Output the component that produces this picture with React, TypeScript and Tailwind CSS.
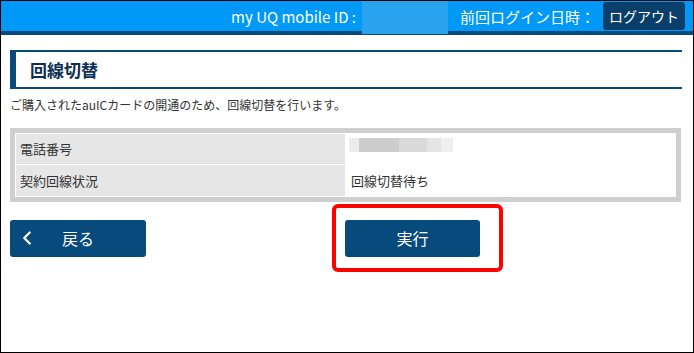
import { ChevronLeft } from 'lucide-react'

const jp = { fontFamily: '"Noto Sans CJK JP", "Noto Sans", sans-serif' }

export default function App() {
  return (
    <div className="w-[694px] h-[353px] bg-white border border-black overflow-hidden" style={jp}>
      {/* ヘッダー */}
      <div className="h-[34px] bg-[#0099f8] border-b-4 border-[#084a7c] flex items-center justify-end pr-[8px] text-white">
        <span className="text-[15px] leading-none">my UQ mobile ID :</span>
        <div className="w-[86px] h-[33px] mt-[2px] bg-[#2aa3ef] ml-[6px] mr-[12px]"></div>
        <span className="text-[15px] leading-none">前回ログイン日時：</span>
        <button className="ml-[8px] h-[28px] px-[6px] bg-[#0a3f6b] rounded-[3px] text-[14px] leading-none">
          ログアウト
        </button>
      </div>

      <div className="px-[9px]">
        {/* タイトル */}
        <div className="mt-[15px] mr-[2px] border-t-2 border-b-2 border-[#084a7c] flex h-[39px]">
          <div className="w-[6px] bg-[#084a7c]"></div>
          <h1 className="ml-[14px] flex items-center text-[17px] font-bold text-[#0c2f52]">回線切替</h1>
        </div>

        <p className="mt-[10px] text-[12px] text-[#333] leading-none">
          ご購入されたauICカードの開通のため、回線切替を行います。
        </p>

        {/* テーブル */}
        <div className="mt-[17px] mr-[3px] bg-[#cfcfcf] p-[5px]">
          <table className="w-full border-collapse text-[13px] text-[#333]">
            <tbody>
              <tr className="h-[31px]">
                <td className="w-[330px] bg-[#e6e6e6] border border-white pl-[4px]">電話番号</td>
                <td className="bg-white border border-white pl-[3px]">
                  <div className="flex h-[14px] -mt-[8px]">
                    <div className="w-[10px] bg-[#ececec]"></div>
                    <div className="w-[40px] bg-[#cdcdcd]"></div>
                    <div className="w-[28px] bg-[#d9d9d9]"></div>
                    <div className="w-[14px] bg-[#e4e4e4]"></div>
                    <div className="w-[12px] bg-[#efefef]"></div>
                  </div>
                </td>
              </tr>
              <tr className="h-[32px]">
                <td className="bg-[#e6e6e6] border border-white pl-[4px]">契約回線状況</td>
                <td className="bg-white border border-white pl-[5px]">回線切替待ち</td>
              </tr>
            </tbody>
          </table>
        </div>

        {/* ボタン */}
        <div className="mt-[2px] flex items-center">
          <button className="w-[136px] h-[37px] bg-[#084a7c] rounded-[3px] text-white flex items-center">
            <ChevronLeft className="ml-[6px] w-[22px] h-[22px]" strokeWidth={2.5} />
            <span className="ml-[24px] text-[16px]">戻る</span>
          </button>
          <div className="ml-[186px] w-[171px] h-[68px] border-4 border-[#ff0000] rounded-[6px] flex items-center pl-[9px]">
            <button className="w-[135px] h-[37px] bg-[#084a7c] rounded-[3px] text-white text-[16px]">
              実行
            </button>
          </div>
        </div>
      </div>
    </div>
  )
}
